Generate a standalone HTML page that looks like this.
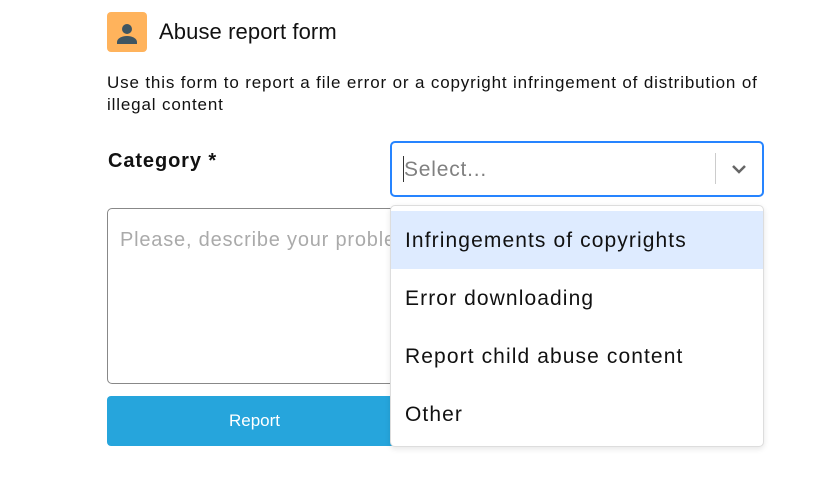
<!DOCTYPE html>
<html><head><style>
body{margin:0;width:840px;height:478px;background:#fff;font-family:"Liberation Sans",sans-serif;color:#111;position:relative;overflow:hidden}
.a{position:absolute}
</style></head><body>
<div class="a" style="left:107px;top:12px;width:40px;height:40px;background:#ffb35c;border-radius:4px">
<svg width="40" height="40" viewBox="0 0 40 40"><circle cx="20" cy="17" r="5" fill="#3f5561"/><path d="M10 32v-2c0-3 4-6 10-6s10 3 10 6v2z" fill="#3f5561"/></svg></div>
<div class="a" style="left:159px;top:19px;font-size:22px;letter-spacing:0.1px">Abuse report form</div>
<div class="a" style="left:107px;top:72px;font-size:17px;line-height:22px;width:700px;letter-spacing:0.85px;white-space:nowrap">Use this form to report a file error or a copyright infringement of distribution of<br>illegal content</div>
<div class="a" style="left:108px;top:150px;font-size:20px;font-weight:bold;letter-spacing:0.9px">Category *</div>
<div class="a" style="left:107px;top:208px;width:300px;height:174px;border:1px solid #888;border-radius:5px"></div>
<div class="a" style="left:120px;top:229px;font-size:20px;color:#aaa;letter-spacing:0.8px;width:270px;overflow:hidden;white-space:nowrap">Please, describe your problem</div>
<div class="a" style="left:107px;top:396px;width:300px;height:50px;background:#26a5dc;border-radius:4px;color:#fff;font-size:17px;line-height:50px;text-indent:122px">Report</div>
<div class="a" style="left:390px;top:141px;width:370px;height:52px;border:2px solid #2684ff;border-radius:5px"></div>
<div class="a" style="left:403px;top:156px;width:1px;height:26px;background:#333"></div>
<div class="a" style="left:404px;top:158px;font-size:21px;color:#808080;letter-spacing:0.8px">Select...</div>
<div class="a" style="left:715px;top:153px;width:1px;height:31px;background:#ccc"></div>
<svg class="a" style="left:730px;top:161px" width="18" height="16" viewBox="0 0 18 16"><path d="M3 5l6 6 6-6" stroke="#666" stroke-width="2.5" fill="none"/></svg>
<div class="a" style="left:390px;top:205px;width:372px;height:240px;border:1px solid #ddd;border-radius:5px;box-shadow:0 2px 6px rgba(0,0,0,.1);background:#fff;font-size:21px;letter-spacing:1.1px">
<div style="margin-top:5px;height:58px;line-height:60px;background:#deebff;padding-left:14px">Infringements of copyrights</div>
<div style="height:58px;line-height:60px;padding-left:14px">Error downloading</div>
<div style="height:58px;line-height:60px;padding-left:14px">Report child abuse content</div>
<div style="height:58px;line-height:60px;padding-left:14px">Other</div>
</div>
</body></html>
